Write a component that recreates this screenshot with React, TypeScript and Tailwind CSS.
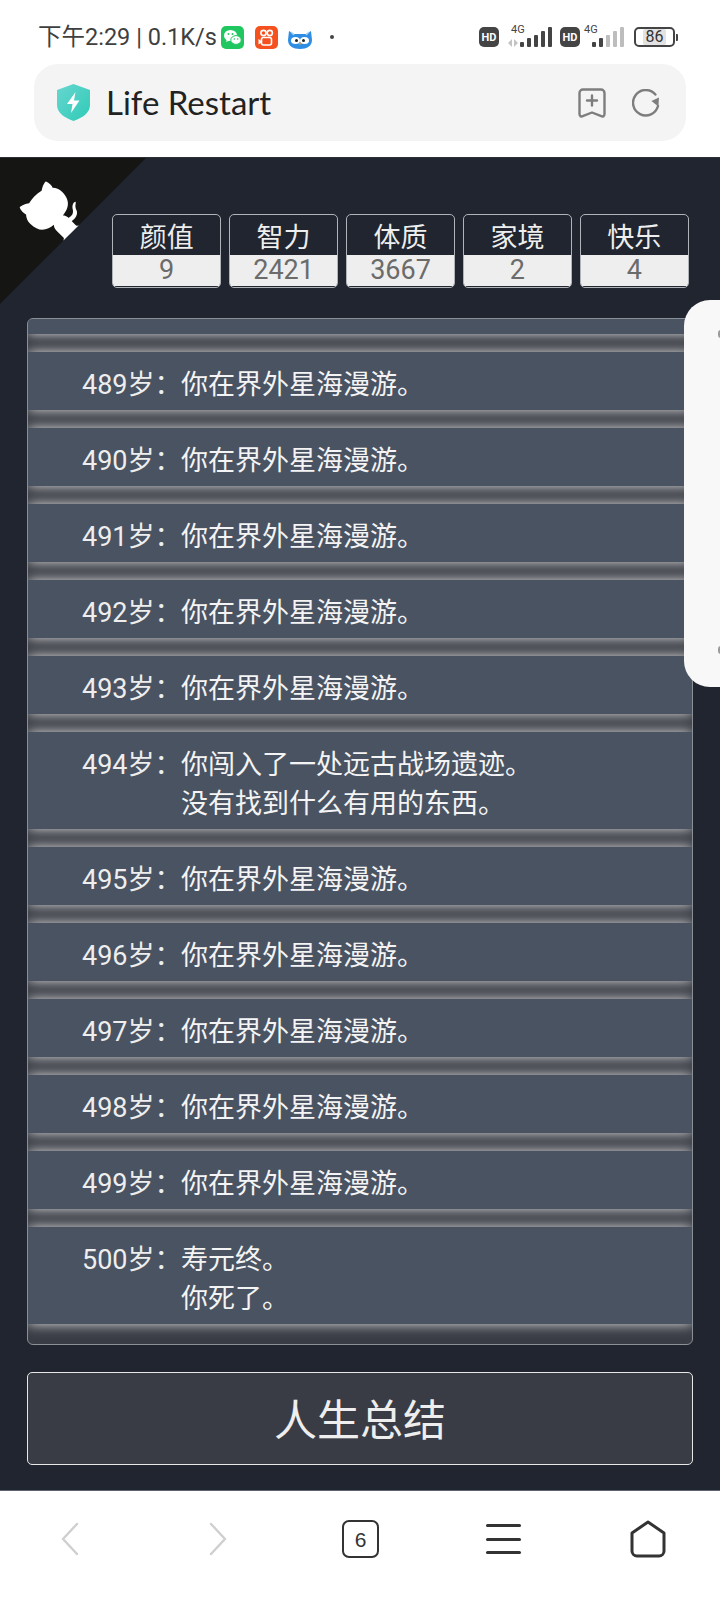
const CJK = "font-['Roboto','Noto_Sans_CJK_SC',sans-serif]"

const stats = [
  { label: '颜值', value: '9' },
  { label: '智力', value: '2421' },
  { label: '体质', value: '3667' },
  { label: '家境', value: '2' },
  { label: '快乐', value: '4' },
]

const wander = '你在界外星海漫游。'

const rows = [
  { age: 489, lines: [wander] },
  { age: 490, lines: [wander] },
  { age: 491, lines: [wander] },
  { age: 492, lines: [wander] },
  { age: 493, lines: [wander] },
  { age: 494, lines: ['你闯入了一处远古战场遗迹。', '没有找到什么有用的东西。'] },
  { age: 495, lines: [wander] },
  { age: 496, lines: [wander] },
  { age: 497, lines: [wander] },
  { age: 498, lines: [wander] },
  { age: 499, lines: [wander] },
  { age: 500, lines: ['寿元终。', '你死了。'] },
]

function SignalBars({ dim }: { dim?: boolean }) {
  const heights = [5, 9, 12, 16, 20]
  return (
    <div className="flex items-end gap-[2.5px]">
      {heights.map((h, i) => (
        <span
          key={h}
          className={`block w-[4.400px] rounded-[1px] ${dim && i > 1 ? 'bg-[#bdbdbd]' : 'bg-[#444]'}`}
          style={{ height: h }}
        />
      ))}
    </div>
  )
}

function HdBadge() {
  return (
    <span className="flex h-[20px] w-[20px] items-center justify-center rounded-[5px] bg-[#444] text-[11px] font-bold leading-none text-white">
      HD
    </span>
  )
}

function WechatIcon() {
  return (
    <svg width="23" height="23" viewBox="0 0 23 23">
      <rect width="23" height="23" rx="5" fill="#20c760" />
      <ellipse cx="9.500" cy="9.500" rx="6.500" ry="5.500" fill="#fff" />
      <path d="M6 13l-1 3 3.500-1.600z" fill="#fff" />
      <ellipse cx="15" cy="14" rx="5.200" ry="4.400" fill="#fff" stroke="#20c760" strokeWidth="1" />
      <circle cx="7.500" cy="8" r="1" fill="#20c760" />
      <circle cx="11.500" cy="8" r="1" fill="#20c760" />
      <circle cx="13.300" cy="13" r=".8" fill="#20c760" />
      <circle cx="16.700" cy="13" r=".8" fill="#20c760" />
    </svg>
  )
}

function KuaishouIcon() {
  return (
    <svg width="23" height="23" viewBox="0 0 23 23">
      <rect width="23" height="23" rx="5" fill="#f4511e" />
      <circle cx="8.500" cy="7" r="2.600" fill="none" stroke="#fff" strokeWidth="1.600" />
      <circle cx="14.800" cy="7" r="2.600" fill="none" stroke="#fff" strokeWidth="1.600" />
      <rect x="6.500" y="11.500" width="10" height="7.500" rx="2" fill="none" stroke="#fff" strokeWidth="1.600" />
      <path d="M3.500 13l3 2v1.500l-3 2z" fill="#fff" />
    </svg>
  )
}

function OwlIcon() {
  return (
    <svg width="24" height="19" viewBox="0 0 24 19">
      <path d="M1 1l5 3h12l5-3 1 9c0 6-5 9-12 9S0 16 0 10z" fill="#2f8de4" />
      <path d="M3 2l3 3M21 2l-3 3" stroke="#a8d4f7" strokeWidth="1.400" />
      <ellipse cx="7.500" cy="10.500" rx="4.500" ry="3.600" fill="#fff" />
      <ellipse cx="16.500" cy="10.500" rx="4.500" ry="3.600" fill="#fff" />
      <circle cx="8.500" cy="10.500" r="1.500" fill="#222" />
      <circle cx="15.500" cy="10.500" r="1.500" fill="#222" />
      <path d="M10.800 12.500h2.400L12 15.500z" fill="#e8a33a" />
    </svg>
  )
}

function StatusBar() {
  return (
    <div className={`flex h-[64px] items-start justify-between pl-[38px] pr-[42px] pt-[25px] ${CJK}`}>
      <div className="flex items-center">
        <span className="w-[183px] whitespace-nowrap text-[23.500px] leading-[24px] text-[#3f3f3f]">下午2:29 | 0.1K/s</span>
        <WechatIcon />
        <span className="ml-[11px]">
          <KuaishouIcon />
        </span>
        <span className="ml-[10px] mt-[4px]">
          <OwlIcon />
        </span>
        <span className="ml-[18px] h-[4px] w-[4px] rounded-full bg-[#444]" />
      </div>
      <div className="mt-[2px] flex items-end">
        <HdBadge />
        <div className="relative ml-[9px] flex h-[20px] w-[44px] justify-end">
          <span className="absolute -top-[3px] left-[3px] text-[11px] leading-[11px] text-[#444]">4G</span>
          <svg width="10" height="8" viewBox="0 0 10 8" className="absolute bottom-0 left-0" fill="#c4c4c4">
            <path d="M4 0v8L0 4zM6 0l4 4-4 4z" />
          </svg>
          <SignalBars />
        </div>
        <span className="ml-[8px]">
          <HdBadge />
        </span>
        <div className="relative ml-[4px] flex h-[20px] w-[40px] justify-end">
          <span className="absolute -top-[3px] left-0 text-[11px] leading-[11px] text-[#444]">4G</span>
          <SignalBars dim />
        </div>
        <div className="ml-[10px] flex items-center">
          <div className="flex h-[20px] w-[41px] items-center justify-center rounded-[5px] border-[2.500px] border-[#444] text-[16px] leading-none text-[#333]">
            <span className="rounded-[2px] bg-[#e2e2e2] px-[3px]">86</span>
          </div>
          <span className="ml-[1px] h-[7px] w-[2px] rounded-r-[1px] bg-[#444]" />
        </div>
      </div>
    </div>
  )
}

function AddressBar() {
  return (
    <div className="mx-[34px] flex h-[77px] items-center rounded-[24px] bg-[#f4f4f4] pl-[23px] pr-[26px]">
      <svg width="33" height="37" viewBox="0 0 33 37">
        <defs>
          <linearGradient id="shield" x1="0" y1="0" x2="1" y2="1">
            <stop offset="0" stopColor="#68d6d0" />
            <stop offset="1" stopColor="#2fcbb6" />
          </linearGradient>
        </defs>
        <path d="M16.500 0L33 6v15c0 8-8 13-16.500 16C8 34 0 29 0 21V6z" fill="url(#shield)" />
        <path d="M18.500 8L10 20h5.500l-1.500 9 8.500-12.500H17z" fill="#fff" />
      </svg>
      <span className="ml-[16px] font-['Lato','Noto_Sans',sans-serif] text-[33px] leading-none text-[#222]">Life Restart</span>
      <div className="ml-auto flex items-center gap-[26px]">
        <svg width="28" height="30" viewBox="0 0 28 30" fill="none" stroke="#7d7d7d" strokeWidth="2.400" strokeLinejoin="round" strokeLinecap="round">
          <path d="M1.500 5a3.500 3.500 0 0 1 3.500-3.500h18a3.500 3.500 0 0 1 3.500 3.500v21c0 2-1.500 3-3.200 2.200L14 24.500l-9.300 3.700C3 29 1.500 28 1.500 26z" />
          <path d="M14 7.500v10M9 12.500h10" />
        </svg>
        <svg width="28" height="28" viewBox="0 0 28 28" fill="none">
          <path d="M26 17a12.700 12.700 0 1 1-2.600-11.500" stroke="#7d7d7d" strokeWidth="2.400" strokeLinecap="round" />
          <path d="M27 8.500l-.6 9-7-5.500z" fill="#7d7d7d" />
        </svg>
      </div>
    </div>
  )
}

function GithubCorner() {
  return (
    <svg width="146" height="146" viewBox="0 0 250 250" className="absolute left-0 top-0 -scale-x-100 fill-[#151513] text-white">
      <path d="M0,0 L115,115 L130,115 L142,142 L250,250 L250,0 Z" />
      <path
        d="M128.3,109.0 C113.8,99.7 119.0,89.6 119.0,89.6 C122.0,82.7 120.5,78.6 120.5,78.6 C119.2,72.0 123.4,76.3 123.4,76.3 C127.3,80.9 125.500,87.3 125.5,87.3 C122.9,97.6 130.6,101.9 134.4,103.2"
        fill="currentColor"
      />
      <path
        d="M115.0,115.0 C114.9,115.1 118.7,116.5 119.8,115.4 L133.7,101.6 C136.9,99.2 139.9,98.4 142.2,98.6 C133.8,88.0 127.5,74.4 143.8,58.0 C148.5,53.4 154.0,51.2 159.7,51.0 C160.3,49.4 163.2,43.6 171.4,40.1 C171.4,40.1 176.1,42.5 178.8,56.2 C183.1,58.6 187.2,61.8 190.9,65.4 C194.5,69.0 197.7,73.2 200.1,77.6 C213.8,80.2 216.3,84.9 216.3,84.9 C212.7,93.1 206.9,96.0 205.4,96.6 C205.1,102.4 203.0,107.8 198.3,112.5 C181.9,128.9 168.3,122.5 157.7,114.1 C157.9,116.9 156.7,120.9 152.7,124.9 L141.0,136.5 C139.8,137.7 141.6,141.9 141.8,141.8 Z"
        fill="currentColor"
      />
    </svg>
  )
}

function StatBoxes() {
  return (
    <div className="ml-[112px] mr-[31px] grid grid-cols-5 gap-[7.500px]">
      {stats.map((s) => (
        <div key={s.label} className="h-[74px] overflow-hidden rounded-[5px] border-[1.500px] border-[#b0b3b8]">
          <div className="h-[40px] text-center text-[27px] leading-[46px] text-[#eeeeee]">{s.label}</div>
          <div className="h-[31px] bg-[#eeeeee] text-center text-[27px] leading-[31px] text-[#6b6b6b]">{s.value}</div>
        </div>
      ))}
    </div>
  )
}

function Trajectory() {
  return (
    <div className="mx-[27px] mt-[30px] h-[1027px] overflow-hidden rounded-[6px] border border-[#8b9097] bg-[#393c44]">
      <div className="flex flex-col gap-[18px]">
        <div className="h-[15px] bg-[#4a5362] shadow-[0_0_12px_rgba(255,255,255,0.85)]" />
        {rows.map((r) => (
          <div
            key={r.age}
            className="flex bg-[#4a5362] pb-[5px] pl-[54px] pt-[14px] text-[27px] leading-[39px] shadow-[0_0_12px_rgba(255,255,255,0.85)]"
          >
            <span className="w-[99px] shrink-0 whitespace-nowrap text-[#eeeeee]">{r.age}岁：</span>
            <div className="text-[#f4f4f4]">
              {r.lines.map((line) => (
                <div key={line}>{line}</div>
              ))}
            </div>
          </div>
        ))}
      </div>
    </div>
  )
}

function BottomNav() {
  return (
    <div className="relative h-[109px] bg-white pt-[29px]">
      <div className="flex w-full items-center pl-[61px] pr-[54px]">
        <svg width="18" height="34" viewBox="0 0 18 34" fill="none" stroke="#cfcfcf" strokeWidth="2.400" strokeLinecap="round" strokeLinejoin="round">
          <path d="M16 2L2 17 16 32" />
        </svg>
        <svg width="18" height="34" viewBox="0 0 18 34" fill="none" stroke="#cfcfcf" strokeWidth="2.400" strokeLinecap="round" strokeLinejoin="round" className="ml-[130px]">
          <path d="M2 2l14 15L2 32" />
        </svg>
        <div className="ml-[115px] flex h-[38px] w-[37px] items-center justify-center rounded-[7px] border-[2.500px] border-[#333] text-[21px] leading-none text-[#333]">
          <span className="font-['Liberation_Sans',sans-serif]">6</span>
        </div>
        <div className="ml-[107px] flex h-[30px] w-[35px] flex-col justify-between">
          <span className="h-[3px] rounded-full bg-[#333]" />
          <span className="h-[3px] rounded-full bg-[#333]" />
          <span className="h-[3px] rounded-full bg-[#333]" />
        </div>
        <svg width="36" height="38" viewBox="0 0 36 38" fill="none" stroke="#333" strokeWidth="3" strokeLinejoin="round" className="ml-auto">
          <path d="M18 2L34 13v18a5 5 0 0 1-5 5H7a5 5 0 0 1-5-5V13z" />
        </svg>
      </div>
    </div>
  )
}

export default function App() {
  return (
    <div className={`relative flex h-[1600px] w-[720px] flex-col overflow-hidden bg-white ${CJK}`}>
      <div className="h-[157px] bg-white">
        <StatusBar />
        <AddressBar />
      </div>
      <main className="relative h-[1334px] border-b border-t border-b-[#5b6470] border-t-[#2b2f36] bg-[#20252f] pt-[56px]">
        <GithubCorner />
        <StatBoxes />
        <Trajectory />
        <button className="mx-[27px] mt-[27px] block h-[93px] w-[666px] rounded-[5px] border border-[#e8e8e8] bg-[#393c44] pt-[5px] text-[43px] leading-none text-[#eeeeee]">
          人生总结
        </button>
        {/* floating side panel from the browser */}
        <div className="absolute -right-[1px] top-[142px] h-[387px] w-[37px] rounded-l-[26px] bg-[#f8f8f9]">
          <span className="absolute right-0 top-[30px] h-[8px] w-[3px] rounded-l-full bg-[#9a9a9a]" />
          <span className="absolute bottom-[33px] right-0 h-[8px] w-[3px] rounded-l-full bg-[#9a9a9a]" />
        </div>
      </main>
      <BottomNav />
    </div>
  )
}
